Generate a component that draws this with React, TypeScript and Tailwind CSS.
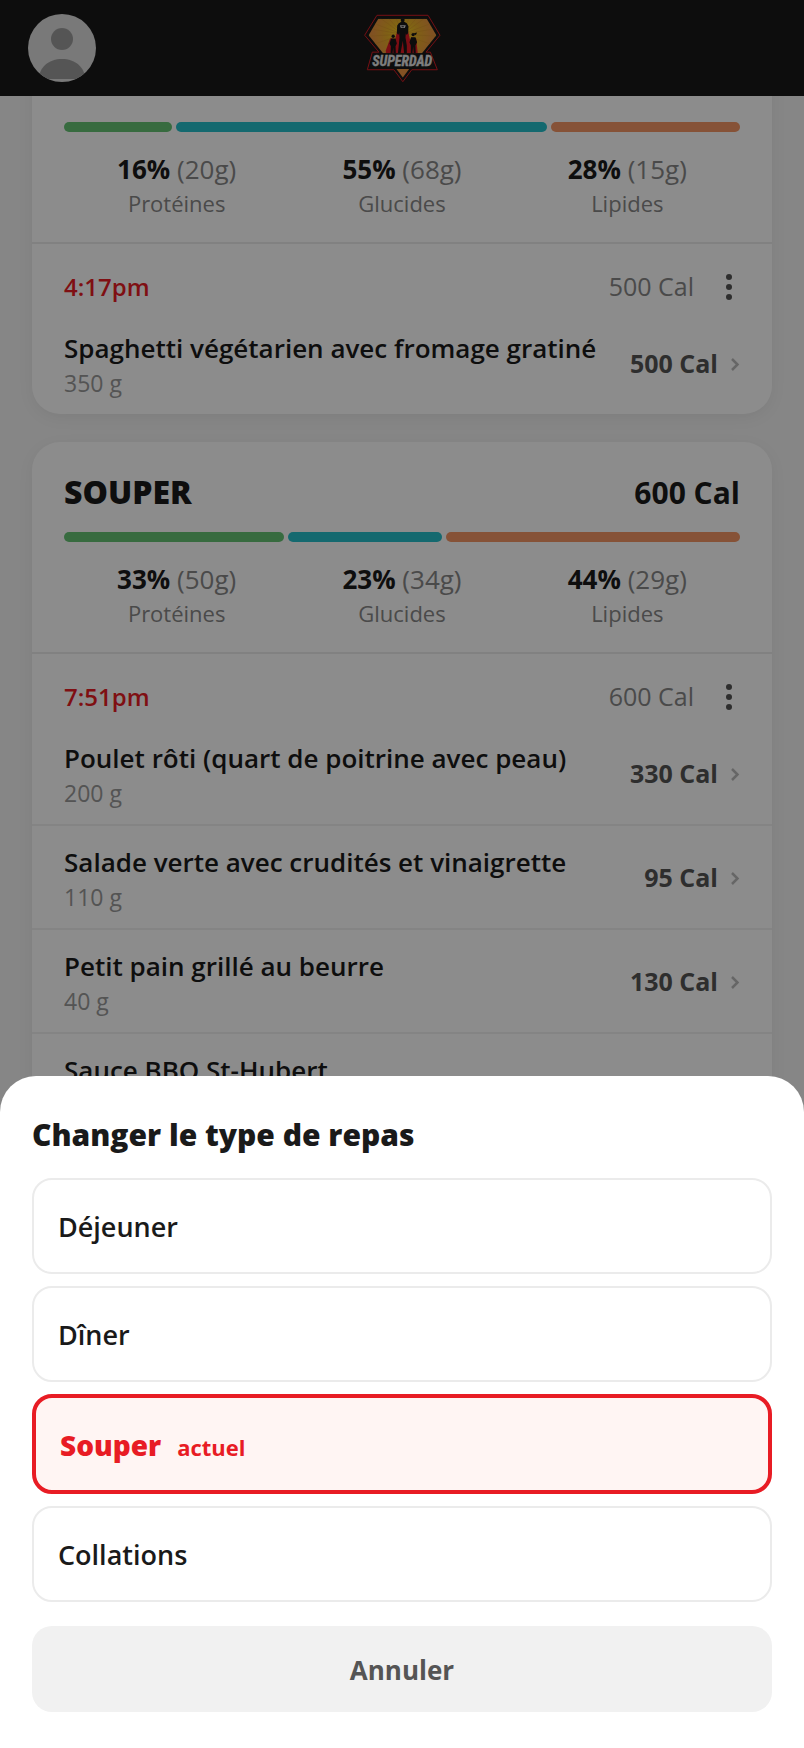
import { useState } from "react";
import clsx from "clsx";

interface Macro {
  label: string;
  percent: number;
  grams: number;
  color: string;
}

interface FoodItem {
  name: string;
  weight: string;
  calories: number;
}

interface Meal {
  title: string;
  calories: number;
  time: string;
  macros: Macro[];
  items: FoodItem[];
}

const MEALS: Meal[] = [
  {
    title: "DÎNER",
    calories: 500,
    time: "4:17pm",
    macros: [
      { label: "Protéines", percent: 16, grams: 20, color: "bg-[#64c374]" },
      { label: "Glucides", percent: 55, grams: 68, color: "bg-[#26bfca]" },
      { label: "Lipides", percent: 28, grams: 15, color: "bg-[#f59664]" },
    ],
    items: [{ name: "Spaghetti végétarien avec fromage gratiné", weight: "350 g", calories: 500 }],
  },
  {
    title: "SOUPER",
    calories: 600,
    time: "7:51pm",
    macros: [
      { label: "Protéines", percent: 33, grams: 50, color: "bg-[#64c374]" },
      { label: "Glucides", percent: 23, grams: 34, color: "bg-[#26bfca]" },
      { label: "Lipides", percent: 44, grams: 29, color: "bg-[#f59664]" },
    ],
    items: [
      { name: "Poulet rôti (quart de poitrine avec peau)", weight: "200 g", calories: 330 },
      { name: "Salade verte avec crudités et vinaigrette", weight: "110 g", calories: 95 },
      { name: "Petit pain grillé au beurre", weight: "40 g", calories: 130 },
      { name: "Sauce BBQ St-Hubert", weight: "30 g", calories: 45 },
    ],
  },
];

const MEAL_TYPES = ["Déjeuner", "Dîner", "Souper", "Collations"];

function Logo() {
  return (
    <svg viewBox="40 40 232 206" className="h-[69px] w-[77px]" role="img" aria-label="Superdad">
      <defs>
        <radialGradient id="glow" cx="156" cy="100" r="90" gradientUnits="userSpaceOnUse">
          <stop offset="0" stopColor="#f8dc20" />
          <stop offset="0.5" stopColor="#e8b028" />
          <stop offset="1" stopColor="#ea9440" />
        </radialGradient>
        <clipPath id="shield">
          <path d="M83 53H229L258 103L214 158H98L54 103Z" />
        </clipPath>
      </defs>
      <path
        d="M79 43H233L269 103L227 154H240L261 207H184L157 243L130 207H50L65 154H85L42 103Z"
        fill="#181818"
        stroke="#d81c24"
        strokeWidth="3"
      />
      <g clipPath="url(#shield)">
        <rect x="50" y="50" width="212" height="110" fill="url(#glow)" />
        <g stroke="#d9962c" strokeWidth="3" opacity="0.6">
          <path d="M156 100L50 60M156 100L50 82M156 100L50 106M156 100L60 134M156 100L80 45M156 100L108 45M156 100L134 45" />
          <path d="M156 100L262 60M156 100L262 82M156 100L262 106M156 100L252 134M156 100L232 45M156 100L204 45M156 100L178 45" />
        </g>
        {/* capes */}
        <path d="M143 78L133 118L130 158H182L179 118L170 78Z" fill="#e01824" />
        <path d="M119 112L106 148V158H140L136 114Z" fill="#e01824" />
        <path d="M182 110L170 146V158H202L197 112Z" fill="#e01824" />
        {/* father */}
        <path d="M151 50H162V60L159 64H154L151 60Z" fill="#161616" />
        <path
          d="M154 62H160L169 67L174 76L173 96L169 102L166 98L165 110L169 134V158H161L157 120L150 158H142L145 132L147 110L146 96L143 102L139 96L140 74L145 67Z"
          fill="#161616"
        />
        <path d="M148 73H166L163 81H151Z" fill="#d8d8d8" />
        <path d="M153 76H160V79H153Z" fill="#161616" />
        {/* children */}
        <circle cx="128" cy="106" r="5" fill="#161616" />
        <path d="M122 113H135L139 128L135 136L136 158H129L128 140L126 158H120L121 136L117 128Z" fill="#161616" />
        <circle cx="188" cy="101" r="5" fill="#161616" />
        <path d="M190 97L200 95L196 103Z" fill="#161616" />
        <path d="M182 109H195L200 124L195 134L196 158H190L188 138L186 158H181L181 134L177 124Z" fill="#161616" />
      </g>
      <path d="M138 205H176L157 230Z" fill="#ee9440" />
      <path d="M70 157H236L253 203H57Z" fill="#181818" />
      <text
        x="155"
        y="196"
        textAnchor="middle"
        fill="#e6e6e6"
        stroke="#e6e6e6"
        strokeWidth="1"
        className="font-['Roboto_Condensed','Liberation_Sans_Narrow','Liberation_Sans',sans-serif] text-[42px] font-bold italic"
      >
        SUPERDAD
      </text>
    </svg>
  );
}

function Avatar() {
  return (
    <button type="button" aria-label="Profil" className="size-[68px] overflow-hidden rounded-full">
      <svg viewBox="0 0 68 68" className="size-full">
        <rect width="68" height="68" fill="#dcdcdc" />
        <circle cx="34" cy="25" r="11" fill="#9c9c9c" />
        <path d="M11 65C11 53 21 45 34 45S57 53 57 65Z" fill="#9c9c9c" />
      </svg>
    </button>
  );
}

function MacroSummary({ macros }: { macros: Macro[] }) {
  return (
    <>
      <div className="flex gap-1">
        {macros.map((macro) => (
          <div
            key={macro.label}
            className={clsx("h-2.5 basis-0 rounded-full", macro.color)}
            style={{ flexGrow: macro.percent }}
          />
        ))}
      </div>
      <div className="mt-5 grid grid-cols-3 text-center">
        {macros.map((macro) => (
          <div key={macro.label}>
            <p className="text-[26px] leading-[34px] text-[#888]">
              <strong className="font-bold text-[#1a1a1a]">{macro.percent}%</strong> ({macro.grams}g)
            </p>
            <p className="text-[22px] leading-[34px] text-[#888]">{macro.label}</p>
          </div>
        ))}
      </div>
    </>
  );
}

function FoodRow({ item }: { item: FoodItem }) {
  return (
    <li className="border-b-2 border-[#f0f0f0] last:border-b-0">
      <button type="button" className="flex w-full items-center px-8 pt-[17px] pb-[15px] text-left">
        <span className="min-w-0 flex-1">
          <span className="block truncate text-[26px] leading-[38px] font-semibold text-[#1a1a1a]">
            {item.name}
          </span>
          <span className="block text-[23px] leading-8 text-[#999]">{item.weight}</span>
        </span>
        <span className="text-[25px] font-bold text-[#555]">{item.calories} Cal</span>
        <svg viewBox="0 0 10 14" className="ml-3 h-3.5 w-2.5" fill="none" stroke="#bbb" strokeWidth="2.5">
          <path d="M2 2L7.5 7.5L2 13" />
        </svg>
      </button>
    </li>
  );
}

function MealCard({ meal }: { meal: Meal }) {
  return (
    <section className="rounded-[28px] bg-white shadow-[0_4px_16px_rgba(0,0,0,0.06)]">
      <div className="border-b-2 border-[#ececec] px-8 pt-[30px] pb-[22px]">
        <div className="mb-5 flex h-10 items-center justify-between text-[#1a1a1a]">
          <h2 className="text-[32px] font-extrabold">{meal.title}</h2>
          <span className="text-[30px] font-bold">{meal.calories} Cal</span>
        </div>
        <MacroSummary macros={meal.macros} />
      </div>
      <div className="flex h-[68px] items-center px-8 pt-[18px] text-2xl">
        <span className="flex-1 font-semibold text-[#e81c24]">{meal.time}</span>
        <span className="text-[25px] text-[#888]">{meal.calories} Cal</span>
        <button type="button" aria-label="Options du repas" className="ml-6 flex w-[22px] justify-center">
          <svg viewBox="0 0 6 26" className="h-[26px] w-1.5" fill="#555">
            <circle cx="3" cy="3" r="3" />
            <circle cx="3" cy="13" r="3" />
            <circle cx="3" cy="23" r="3" />
          </svg>
        </button>
      </div>
      <ul>
        {meal.items.map((item) => (
          <FoodRow key={item.name} item={item} />
        ))}
      </ul>
    </section>
  );
}

interface MealTypeSheetProps {
  current: string;
  onSelect: (type: string) => void;
  onClose: () => void;
}

function MealTypeSheet({ current, onSelect, onClose }: MealTypeSheetProps) {
  return (
    <div className="fixed inset-0 z-20 flex items-end bg-black/45">
      <div
        role="dialog"
        aria-labelledby="sheet-title"
        className="w-full rounded-t-[36px] bg-white px-8 py-9"
      >
        <h2 id="sheet-title" className="mb-5 text-[30px] leading-[46px] font-extrabold text-[#1a1a1a]">
          Changer le type de repas
        </h2>
        <div className="flex flex-col gap-3">
          {MEAL_TYPES.map((type) => {
            const isCurrent = type === current;
            return (
              <button
                key={type}
                type="button"
                onClick={() => onSelect(type)}
                className={clsx(
                  "flex items-baseline gap-4 rounded-[20px] px-6 pt-[29px] pb-[27px] text-left leading-9",
                  isCurrent
                    ? "border-4 border-[#e81c24] bg-[#fff5f3] text-[28px] font-extrabold text-[#e81c24]"
                    : "border-2 border-[#ebebeb] bg-white text-[27px] font-semibold text-[#1a1a1a]"
                )}
              >
                {type}
                {isCurrent && <span className="text-[22px] leading-none font-bold">actuel</span>}
              </button>
            );
          })}
        </div>
        <button
          type="button"
          onClick={onClose}
          className="mt-6 w-full rounded-[20px] bg-[#f1f1f1] pt-[25px] pb-[23px] text-[26px] leading-[38px] font-bold text-[#555]"
        >
          Annuler
        </button>
      </div>
    </div>
  );
}

export default function App() {
  const [mealType, setMealType] = useState("Souper");
  const [isSheetOpen, setIsSheetOpen] = useState(true);

  const handleSelect = (type: string) => {
    setMealType(type);
    setIsSheetOpen(false);
  };

  return (
    <div className="min-h-screen bg-[#f4f4f4] font-['Open_Sans','Noto_Sans',sans-serif]">
      <header className="fixed inset-x-0 top-0 z-10 grid h-24 grid-cols-[1fr_auto_1fr] items-center bg-[#181818] px-7">
        <Avatar />
        <Logo />
      </header>

      <main className="flex flex-col gap-7 px-8 py-8">
        {MEALS.map((meal) => (
          <MealCard key={meal.title} meal={meal} />
        ))}
      </main>

      {isSheetOpen && (
        <MealTypeSheet current={mealType} onSelect={handleSelect} onClose={() => setIsSheetOpen(false)} />
      )}
    </div>
  );
}
